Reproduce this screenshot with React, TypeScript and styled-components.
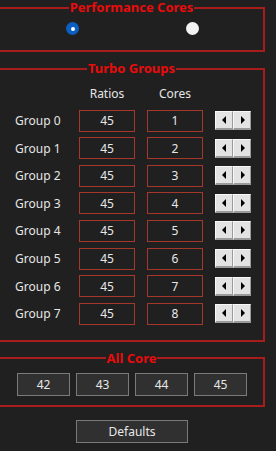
import React from 'react';
import styled, { createGlobalStyle } from 'styled-components';

const GlobalStyle = createGlobalStyle`
  html, body {
    margin: 0;
    padding: 0;
    background: #202020;
  }
  body {
    font-family: "Noto Sans", "Open Sans", sans-serif;
    font-size: 12px;
    color: #e6e6e6;
    overflow: hidden;
  }
`;

const Page = styled.div`
  width: 276px;
  height: 451px;
  display: flex;
  flex-direction: column;
  align-items: flex-start;
`;

const Panel = styled.fieldset<{ $top: number; $padTop: number; $padBottom: number }>`
  box-sizing: border-box;
  width: 267px;
  margin: ${(p) => p.$top}px 0 0 -2px;
  padding: ${(p) => p.$padTop}px 0 ${(p) => p.$padBottom}px 0;
  border: 2px solid #a81c1c;
  min-width: 0;

  legend {
    margin: 0 auto;
    padding: 0 1px;
    font-size: 13px;
    line-height: 13px;
    font-weight: 700;
    color: #e80c0c;
  }
`;

const RadioRow = styled.div`
  display: flex;
  gap: 107px;
  padding-left: 66px;
`;

const Radio = styled.span<{ $checked?: boolean }>`
  box-sizing: border-box;
  width: 13px;
  height: 13px;
  border-radius: 50%;
  display: flex;
  align-items: center;
  justify-content: center;
  background: ${(p) => (p.$checked ? '#0b5fc2' : '#f3f3f3')};

  &::after {
    content: '';
    display: ${(p) => (p.$checked ? 'block' : 'none')};
    width: 4px;
    height: 4px;
    border-radius: 50%;
    background: #ffffff;
  }
`;

const GroupGrid = styled.div`
  display: grid;
  grid-template-columns: 52px 56px 56px 36px;
  grid-auto-rows: 22px;
  column-gap: 12px;
  row-gap: 5.6px;
  padding-left: 15px;
  align-items: center;
`;

const HeaderCell = styled.div`
  text-align: center;
  margin-bottom: -1.6px;
`;

const Label = styled.div`
  white-space: nowrap;
`;

const ValueBox = styled.div`
  box-sizing: border-box;
  height: 22px;
  border: 1px solid #a5382a;
  display: flex;
  align-items: center;
  justify-content: center;
  color: #e8e8e8;
`;

const Spinner = styled.div`
  display: flex;
  height: 19px;
`;

const SpinButton = styled.span`
  box-sizing: border-box;
  width: 18px;
  height: 19px;
  background: #e3e3e3;
  border-top: 1px solid #f8f8f8;
  border-left: 1px solid #f8f8f8;
  border-right: 1px solid #9a9a9a;
  border-bottom: 2px solid #9a9a9a;
  display: flex;
  align-items: center;
  justify-content: center;
`;

const AllCoreRow = styled.div`
  display: flex;
  gap: 6px;
  padding-left: 17px;
`;

const CoreBox = styled.div`
  box-sizing: border-box;
  width: 53px;
  height: 23px;
  background: #303030;
  border: 1px solid #7a7a7a;
  display: flex;
  align-items: center;
  justify-content: center;
  color: #e8e8e8;
`;

const DefaultsButton = styled.button`
  box-sizing: border-box;
  align-self: flex-start;
  margin: 13px 0 0 76px;
  width: 112px;
  height: 23px;
  padding: 0;
  background: #303030;
  border: 1px solid #7a7a7a;
  color: #e8e8e8;
  font-family: inherit;
  font-size: 12px;
`;

const Arrow = ({ dir }: { dir: 'left' | 'right' }) => (
  <svg width="5" height="8" viewBox="0 0 5 8">
    {dir === 'left' ? <path d="M4 0 L0 4 L4 8 Z" fill="#000" /> : <path d="M1 0 L5 4 L1 8 Z" fill="#000" />}
  </svg>
);

const groups = [1, 2, 3, 4, 5, 6, 7, 8];
const allCore = [42, 43, 44, 45];

const App: React.FC = () => (
  <Page>
    <GlobalStyle />

    <Panel $top={1} $padTop={8} $padBottom={15}>
      <legend>Performance Cores</legend>
      <RadioRow>
        <Radio $checked />
        <Radio />
      </RadioRow>
    </Panel>

    <Panel $top={10} $padTop={7} $padBottom={15}>
      <legend>Turbo Groups</legend>
      <GroupGrid>
        <div />
        <HeaderCell>Ratios</HeaderCell>
        <HeaderCell>Cores</HeaderCell>
        <div />
        {groups.map((cores, i) => (
          <React.Fragment key={i}>
            <Label>Group {i}</Label>
            <ValueBox>45</ValueBox>
            <ValueBox>{cores}</ValueBox>
            <Spinner>
              <SpinButton>
                <Arrow dir="left" />
              </SpinButton>
              <SpinButton>
                <Arrow dir="right" />
              </SpinButton>
            </Spinner>
          </React.Fragment>
        ))}
      </GroupGrid>
    </Panel>

    <Panel $top={10} $padTop={8} $padBottom={9}>
      <legend>All Core</legend>
      <AllCoreRow>
        {allCore.map((v) => (
          <CoreBox key={v}>{v}</CoreBox>
        ))}
      </AllCoreRow>
    </Panel>

    <DefaultsButton>Defaults</DefaultsButton>
  </Page>
);

export default App;
